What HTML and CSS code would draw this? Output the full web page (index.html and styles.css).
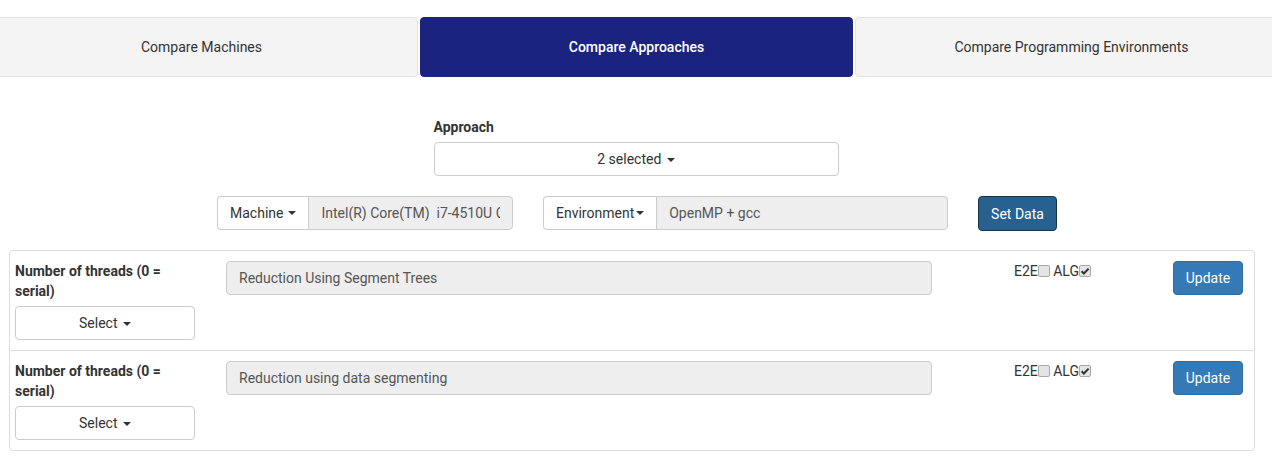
FILE: index.html
```html
<!DOCTYPE html>
<html>
<head>
<meta charset="utf-8">
<link rel="stylesheet" href="styles.css">
</head>
<body>
<nav class="tabs">
  <div class="tab">Compare Machines</div>
  <div class="tab active">Compare Approaches</div>
  <div class="tab">Compare Programming Environments</div>
</nav>

<section class="approach">
  <label class="approach-label">Approach</label>
  <button class="btn btn-default btn-block">2 selected <span class="caret"></span></button>
</section>

<section class="controls">
  <div class="input-group machine">
    <span class="addon">Machine <span class="caret"></span></span>
    <input class="field" type="text" value="Intel(R) Core(TM)  i7-4510U CPU @ 2.00GHz" readonly>
  </div>
  <div class="input-group env">
    <span class="addon">Environment<span class="caret"></span></span>
    <input class="field" type="text" value="OpenMP + gcc" readonly>
  </div>
  <button class="btn btn-dark">Set Data</button>
</section>

<section class="panel">
  <div class="row">
    <div class="threads">
      <div class="threads-label">Number of threads (0 = serial)</div>
      <button class="btn btn-default btn-block">Select <span class="caret"></span></button>
    </div>
    <input class="field name" type="text" value="Reduction Using Segment Trees" readonly>
    <div class="checks">E2E<span class="cb"></span> ALG<span class="cb"><svg viewBox="0 0 12 12" width="12" height="12"><path d="M2.6 6.2 L4.9 8.5 L9.6 3.6" fill="none" stroke="#333" stroke-width="2"/></svg></span></div>
    <button class="btn btn-primary">Update</button>
  </div>
  <div class="row">
    <div class="threads">
      <div class="threads-label">Number of threads (0 = serial)</div>
      <button class="btn btn-default btn-block">Select <span class="caret"></span></button>
    </div>
    <input class="field name" type="text" value="Reduction using data segmenting" readonly>
    <div class="checks">E2E<span class="cb"></span> ALG<span class="cb"><svg viewBox="0 0 12 12" width="12" height="12"><path d="M2.6 6.2 L4.9 8.5 L9.6 3.6" fill="none" stroke="#333" stroke-width="2"/></svg></span></div>
    <button class="btn btn-primary">Update</button>
  </div>
</section>
</body>
</html>
```

FILE: styles.css
```css
* { box-sizing: border-box; }

html, body {
  margin: 0;
  padding: 0;
  background: #fff;
  overflow: hidden;
}

body {
  font-family: Roboto, "Liberation Sans", Arial, sans-serif;
  font-size: 14px;
  line-height: 20px;
  color: #333;
  padding-top: 17px;
}

.tabs {
  display: flex;
  gap: 2px;
  margin: 0 -16px 0 -15px;
}

.tab {
  flex: 1 1 0;
  height: 60px;
  display: flex;
  align-items: center;
  justify-content: center;
  background: #f4f4f4;
  border: 1px solid #e2e2e2;
  border-radius: 4px;
  color: #333;
}

.tab.active {
  background: #1a237e;
  border-color: #1a237e;
  color: #fff;
  font-weight: 500;
}

.approach {
  width: 405px;
  margin: 40px auto 0;
  display: flex;
  flex-direction: column;
}

.approach-label {
  font-weight: 700;
  margin-bottom: 5px;
}

.btn {
  font-family: inherit;
  font-size: 14px;
  line-height: 20px;
  height: 34px;
  padding: 6px 12px;
  border: 1px solid #ccc;
  border-radius: 4px;
  background: #fff;
  color: #333;
  cursor: pointer;
  white-space: nowrap;
}

.btn-block {
  display: block;
  width: 100%;
}

.caret {
  display: inline-block;
  width: 0;
  height: 0;
  margin-left: 2px;
  vertical-align: middle;
  border-top: 4px solid;
  border-right: 4px solid transparent;
  border-left: 4px solid transparent;
}

.controls {
  display: flex;
  justify-content: center;
  gap: 30px;
  margin-top: 20px;
  padding-left: 2px;
}

.input-group {
  display: flex;
  height: 34px;
}

.machine { width: 296px; }
.env { width: 405px; }

.addon {
  display: flex;
  align-items: center;
  gap: 2px;
  padding: 6px 12px;
  background: #fff;
  border: 1px solid #ccc;
  border-right: 0;
  border-radius: 4px 0 0 4px;
  color: #333;
  white-space: nowrap;
}

.addon .caret { margin-left: 3px; }

.env .addon .caret { margin-left: 0; }

.field {
  font-family: inherit;
  font-size: 14px;
  height: 34px;
  padding: 6px 12px;
  background: #eee;
  border: 1px solid #ccc;
  border-radius: 0 4px 4px 0;
  color: #555;
  min-width: 0;
  flex: 1 1 auto;
  outline: none;
}

.btn-dark {
  background: #286090;
  border-color: #1b3346;
  color: #fff;
  width: 79px;
  height: 35px;
  padding: 6px 0;
}

.panel {
  margin: 19px 17px 0 9px;
  border: 1px solid #ddd;
  border-radius: 4px;
}

.row {
  display: grid;
  grid-template-columns: 180px 706px 1fr 70px;
  column-gap: 31px;
  align-items: start;
  padding: 10px 11px 10px 5px;
}

.row + .row {
  border-top: 1px solid #ddd;
}

.threads-label {
  font-weight: 700;
  margin-bottom: 5px;
}

.name {
  border-radius: 4px;
}

.checks {
  justify-self: center;
  display: flex;
  align-items: flex-start;
  color: #333;
  white-space: pre;
}

.cb {
  display: inline-block;
  width: 12px;
  height: 12px;
  margin-top: 4px;
  background: #e4e4e4;
  border: 1px solid #a8a8a8;
  border-radius: 2px;
  position: relative;
}

.cb svg {
  position: absolute;
  left: -1px;
  top: -1px;
}

.btn-primary {
  background: #337ab7;
  border-color: #2e6da4;
  color: #fff;
  width: 70px;
  padding: 6px 0;
}
```
